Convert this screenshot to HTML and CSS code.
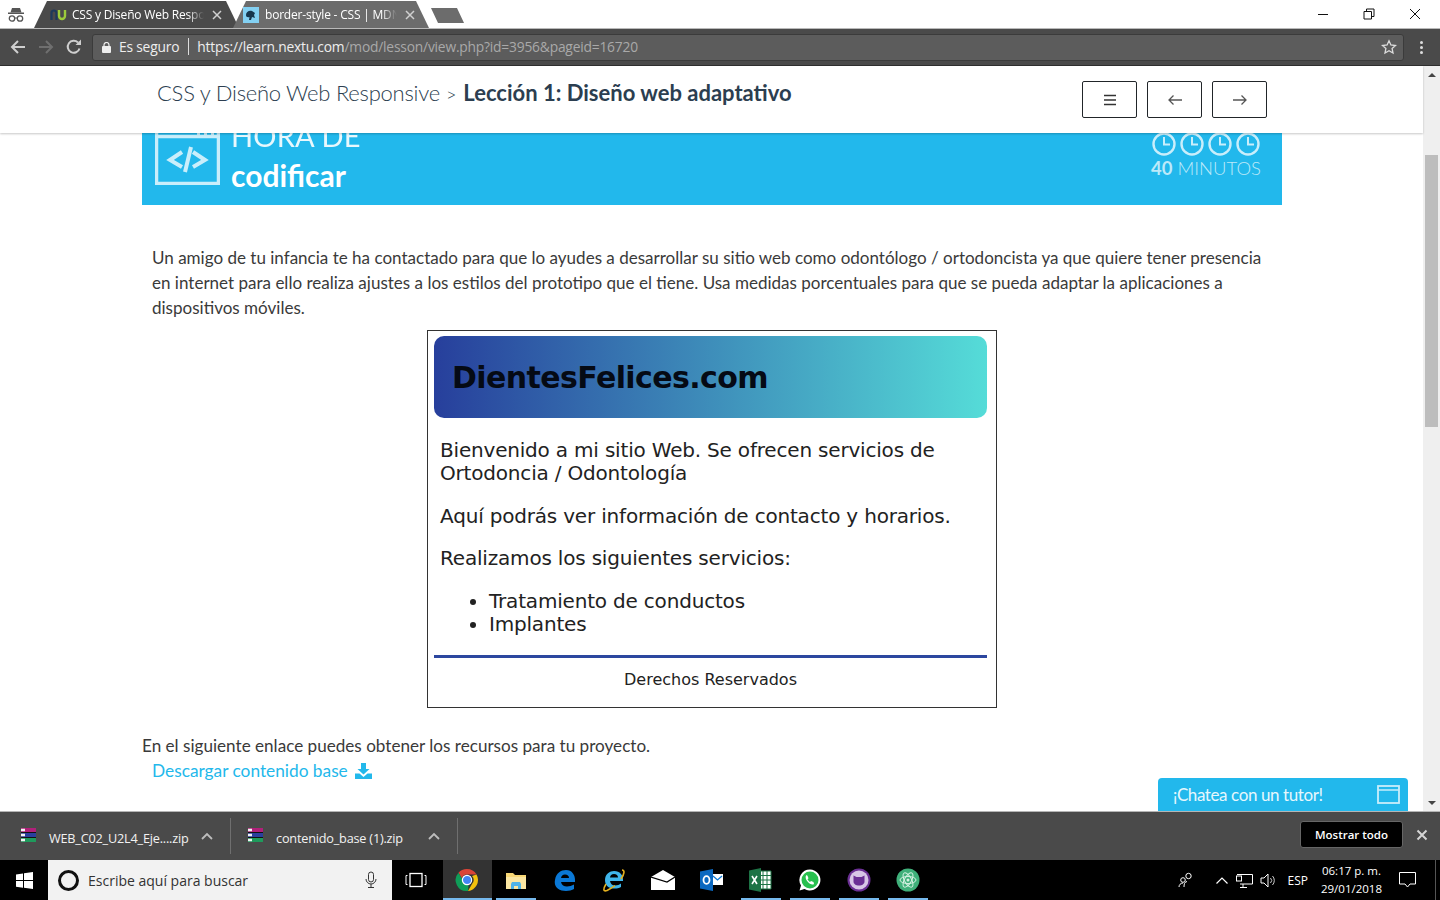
FILE: index.html
```html
<!DOCTYPE html>
<html lang="es">
<head>
    <meta charset="UTF-8">
    <title>CSS y Diseño Web Responsive</title>
    <link rel="stylesheet" href="styles.css">
</head>
<body>
<div class="screen">
    <div class="tabstrip">
        <svg class="incognito" width="18" height="18" viewBox="0 0 18 18"><path d="M5 2h8l1.500 4.500h-11z" fill="#555"/><rect x="1" y="6.500" width="16" height="1.500" fill="#555"/><circle cx="5" cy="12.500" r="2.700" fill="none" stroke="#555" stroke-width="1.300"/><circle cx="13" cy="12.500" r="2.700" fill="none" stroke="#555" stroke-width="1.300"/><path d="M7.500 12h3" stroke="#555"/></svg>
        <div class="tab tab-active">
            <svg width="17" height="14" viewBox="0 0 17 14"><path d="M1.500 12V5a2.500 2.500 0 0 1 5 0v7" fill="none" stroke="#1d3a5c" stroke-width="2.200"/><path d="M9 2v6a3 3 0 0 0 6 0V2" fill="none" stroke="#9ccb3b" stroke-width="2.400"/></svg>
            <span class="tab-title">CSS y Diseño Web Respo</span>
            <svg class="tab-x" width="10" height="10" viewBox="0 0 10 10"><path d="M1 1l8 8M9 1L1 9" stroke="#d0d0d0" stroke-width="1.500"/></svg>
        </div>
        <div class="tab tab-other">
            <svg width="16" height="16" viewBox="0 0 16 16"><rect width="16" height="16" fill="#83d0f2"/><path d="M3 8c0-3 3-5 6-4l3 2-1 2 1 3-3-1-1 3H6l.5-3C4.500 10.500 3 10 3 8z" fill="#16364d"/></svg>
            <span class="tab-title">border-style - CSS | MDN</span>
            <svg class="tab-x" width="10" height="10" viewBox="0 0 10 10"><path d="M1 1l8 8M9 1L1 9" stroke="#d0d0d0" stroke-width="1.500"/></svg>
        </div>
        <div class="tab-new"></div>
        <div class="win-controls">
            <svg width="12" height="12" viewBox="0 0 12 12"><path d="M1 6.500h10" stroke="#111"/></svg>
            <svg width="12" height="12" viewBox="0 0 12 12"><path d="M3.500 3V1h7.500v7.500H9M1 3.500h7.500V11H1z" fill="none" stroke="#111"/></svg>
            <svg width="12" height="12" viewBox="0 0 12 12"><path d="M1 1l10 10M11 1L1 11" stroke="#111"/></svg>
        </div>
    </div>

    <div class="toolbar">
        <svg class="nav-ic" width="16" height="16" viewBox="0 0 16 16"><path d="M15 8H2M8 2L2 8l6 6" fill="none" stroke="#cfcfcf" stroke-width="2"/></svg>
        <svg class="nav-ic" width="16" height="16" viewBox="0 0 16 16"><path d="M1 8h13M8 2l6 6-6 6" fill="none" stroke="#6f6f6f" stroke-width="2"/></svg>
        <svg class="nav-ic" width="16" height="16" viewBox="0 0 16 16"><path d="M13.500 9.500A6 6 0 1 1 12 3.500" fill="none" stroke="#cfcfcf" stroke-width="2"/><path d="M9.500 6H15V.5z" fill="#cfcfcf"/></svg>
        <div class="omnibox">
            <svg width="9" height="11" viewBox="0 0 9 11"><rect y="4" width="9" height="7" rx="1" fill="#eee"/><path d="M2 5V3a2.500 2.500 0 0 1 5 0v2" fill="none" stroke="#eee" stroke-width="1.200"/></svg>
            <span class="secure">Es seguro</span>
            <span class="url"><b>https://learn.nextu.com</b>/mod/lesson/view.php?id=3956&amp;pageid=16720</span>
            <svg class="star" width="16" height="16" viewBox="0 0 16 16"><path d="M8 1.800l1.900 4.200 4.600.5-3.400 3 .9 4.500L8 11.700 4 14l.9-4.500-3.400-3 4.600-.5z" fill="none" stroke="#dcdcdc" stroke-width="1.300"/></svg>
        </div>
        <div class="kebab"><i></i><i></i><i></i></div>
    </div>

    <div class="viewport">
        <div class="page-col">
            <header class="lesson-bar">
                <h1 class="crumbs"><span class="crumb-course">CSS y Diseño Web Responsive</span> <span class="crumb-sep">&gt;</span> <strong>Lección 1: Diseño web adaptativo</strong></h1>
                <div class="lesson-btns">
                    <button class="nav-btn"><svg width="14" height="12" viewBox="0 0 14 12"><path d="M1 1.500h12M1 6h12M1 10.500h12" stroke="#333" stroke-width="1.500"/></svg></button>
                    <button class="nav-btn"><svg width="16" height="12" viewBox="0 0 16 12"><path d="M15 6H2M6.500 1.500L2 6l4.500 4.500" fill="none" stroke="#555" stroke-width="1.300"/></svg></button>
                    <button class="nav-btn"><svg width="16" height="12" viewBox="0 0 16 12"><path d="M1 6h13M9.500 1.500L14 6l-4.500 4.500" fill="none" stroke="#555" stroke-width="1.300"/></svg></button>
                </div>
            </header>
            <main class="content">
                <section class="banner">
                    <svg class="code-ic" width="65" height="66" viewBox="0 0 65 66"><path d="M3 4h59a2 2 0 0 1 2 2v57a2 2 0 0 1-2 2H3a2 2 0 0 1-2-2V6a2 2 0 0 1 2-2z" fill="none" stroke="#c9eefb" stroke-width="4.500"/><path d="M2 17.500h61" stroke="#c9eefb" stroke-width="3.500"/><path d="M42 15h3M49 15h3M56 15h3" stroke="#c9eefb" stroke-width="4"/><path d="M27 33l-12 8 12 7M38 33l12 8-12 7M36 28l-6 25" fill="none" stroke="#c9eefb" stroke-width="4"/></svg>
                    <div class="banner-title"><span>HORA DE</span><b>codificar</b></div>
                    <div class="banner-time">
                        <div class="clocks">
                            <svg width="26" height="26" viewBox="0 0 26 26"><circle cx="13" cy="13" r="10.500" fill="none" stroke="#c9eefb" stroke-width="2.400"/><path d="M13 6v7.500h6" fill="none" stroke="#c9eefb" stroke-width="2"/></svg>
                            <svg width="26" height="26" viewBox="0 0 26 26"><circle cx="13" cy="13" r="10.500" fill="none" stroke="#c9eefb" stroke-width="2.400"/><path d="M13 6v7.500h6" fill="none" stroke="#c9eefb" stroke-width="2"/></svg>
                            <svg width="26" height="26" viewBox="0 0 26 26"><circle cx="13" cy="13" r="10.500" fill="none" stroke="#c9eefb" stroke-width="2.400"/><path d="M13 6v7.500h6" fill="none" stroke="#c9eefb" stroke-width="2"/></svg>
                            <svg width="26" height="26" viewBox="0 0 26 26"><circle cx="13" cy="13" r="10.500" fill="none" stroke="#c9eefb" stroke-width="2.400"/><path d="M13 6v7.500h6" fill="none" stroke="#c9eefb" stroke-width="2"/></svg>
                        </div>
                        <div class="minutes"><b>40</b> MINUTOS</div>
                    </div>
                </section>

                <p class="intro">Un amigo de tu infancia te ha contactado para que lo ayudes a desarrollar su sitio web como odontólogo / ortodoncista ya que quiere tener presencia en internet para ello realiza ajustes a los estilos del prototipo que el tiene. Usa medidas porcentuales para que se pueda adaptar la aplicaciones a dispositivos móviles.</p>

                <figure class="sample">
                    <div class="sample-head">DientesFelices.com</div>
                    <div class="sample-body">
                        <p>Bienvenido a mi sitio Web. Se ofrecen servicios de Ortodoncia / Odontología</p>
                        <p>Aquí podrás ver información de contacto y horarios.</p>
                        <p>Realizamos los siguientes servicios:</p>
                        <ul>
                            <li>Tratamiento de conductos</li>
                            <li>Implantes</li>
                        </ul>
                    </div>
                    <div class="sample-foot">Derechos Reservados</div>
                </figure>

                <p class="resources">En el siguiente enlace puedes obtener los recursos para tu proyecto.</p>
                <a class="download-link" href="#">Descargar contenido base
                    <svg width="17" height="16" viewBox="0 0 17 16"><path d="M6 0h5v6h3.500L8.500 11.500 2.500 6H6z" fill="#23b8eb"/><path d="M0 10.500h4.500l4 3.500 4-3.500H17V16H0z" fill="#23b8eb"/></svg>
                </a>
            </main>
        </div>
        <div class="scrollbar">
            <span class="arrow-up"></span>
            <div class="thumb"></div>
            <span class="arrow-down"></span>
        </div>
        <div class="chat-tab">
            <span>¡Chatea con un tutor!</span>
            <svg width="23" height="19" viewBox="0 0 23 19"><rect x="1" y="1" width="21" height="17" fill="none" stroke="#c9eefb" stroke-width="1.800"/><path d="M1 5h21" stroke="#c9eefb" stroke-width="1.500"/></svg>
        </div>
    </div>

    <div class="downloads">
        <div class="dl-item">
            <svg class="rar" width="17" height="16" viewBox="0 0 17 16"><rect x="1" y="1" width="15" height="4" fill="#b0207a"/><rect x="1" y="6" width="15" height="4" fill="#2a3f9d"/><rect x="1" y="11" width="15" height="4" fill="#1f9a5c"/><path d="M1 3h4M1 8h4M1 13h4" stroke="#f2f2f2" stroke-width="2.500"/><path d="M1 5.500h15M1 10.500h15" stroke="#111"/></svg>
            <span class="dl-name">WEB_C02_U2L4_Eje....zip</span>
            <svg width="12" height="8" viewBox="0 0 12 8"><path d="M1 7l5-5 5 5" fill="none" stroke="#bdbdbd" stroke-width="1.800"/></svg>
        </div>
        <div class="dl-item dl-second">
            <svg class="rar" width="17" height="16" viewBox="0 0 17 16"><rect x="1" y="1" width="15" height="4" fill="#b0207a"/><rect x="1" y="6" width="15" height="4" fill="#2a3f9d"/><rect x="1" y="11" width="15" height="4" fill="#1f9a5c"/><path d="M1 3h4M1 8h4M1 13h4" stroke="#f2f2f2" stroke-width="2.500"/><path d="M1 5.500h15M1 10.500h15" stroke="#111"/></svg>
            <span class="dl-name">contenido_base (1).zip</span>
            <svg width="12" height="8" viewBox="0 0 12 8"><path d="M1 7l5-5 5 5" fill="none" stroke="#bdbdbd" stroke-width="1.800"/></svg>
        </div>
        <button class="show-all">Mostrar todo</button>
        <svg class="dl-close" width="12" height="12" viewBox="0 0 12 12"><path d="M1.500 1.500l9 9M10.500 1.500l-9 9" stroke="#d5d5d5" stroke-width="2"/></svg>
    </div>

    <div class="taskbar">
        <svg class="start" width="17" height="17" viewBox="0 0 17 17"><path d="M0 2.400L7 1.400v6.700H0zM8 1.300L17 0v8.100H8zM0 9h7v6.700l-7-1zM8 9h9v8l-9-1.300z" fill="#fff"/></svg>
        <div class="search">
            <span class="cortana"></span>
            <span class="search-text">Escribe aquí para buscar</span>
            <svg width="12" height="18" viewBox="0 0 12 18"><rect x="3.500" y="1" width="5" height="10" rx="2.500" fill="none" stroke="#333"/><path d="M1 8a5 5 0 0 0 10 0M6 13v3M3 16.500h6" fill="none" stroke="#333"/></svg>
        </div>
        <svg class="taskview" width="22" height="16" viewBox="0 0 22 16"><rect x="5" y="1.500" width="12" height="13" fill="none" stroke="#fff" stroke-width="1.300"/><path d="M2.500 3.500H1v9h1.500M19.500 3.500H21v9h-1.500" fill="none" stroke="#fff"/></svg>
        <div class="apps">
            <div class="app app-active app-open">
                <svg width="24" height="24" viewBox="0 0 24 24"><path d="M12 1a11 11 0 0 1 9.500 5.500H12a5.500 5.500 0 0 0-5.200 3.800L3.500 4.700A11 11 0 0 1 12 1z" fill="#db4437"/><path d="M21.500 6.500A11 11 0 0 1 13 23l4-7a5.500 5.500 0 0 0 0-8z" fill="#f4c20d"/><path d="M13 23A11 11 0 0 1 3.500 4.700L8 12.500A5.500 5.500 0 0 0 13.500 17z" fill="#0f9d58"/><circle cx="12" cy="12" r="4.600" fill="#4285f4" stroke="#fff" stroke-width="1.200"/></svg>
            </div>
            <div class="app app-open">
                <svg width="22" height="20" viewBox="0 0 22 20"><path d="M1 3h7l2 2h11v14H1z" fill="#f8d775"/><path d="M1 7h20v12H1z" fill="#fbe6a2"/><path d="M6 19v-5l1-2h8l1 2v5h-3v-3H9v3z" fill="#4fb3e8"/></svg>
            </div>
            <div class="app">
                <svg width="22" height="22" viewBox="0 0 22 22"><path d="M1 11C2 4 7 1 12 1c6 0 9 5 9 10v2H7c.5 3 3 4.500 6 4.500 2.500 0 5-.8 7-2V20c-2 1.200-5 2-8 2C5 22-.5 18 1 11zm6-2h8c0-2-1.500-3.500-4-3.500S7.500 7 7 9z" fill="#0a78d6"/></svg>
            </div>
            <div class="app">
                <svg width="24" height="24" viewBox="0 0 24 24"><path d="M3 12c0-6 5-9 9-9 6 0 9 4 9 9v1H8c.5 3 2.500 4.500 5 4.500 2.500 0 4.500-.8 6-2v3.500c-2 1-4 1.500-6.500 1.500C7 20.500 3 18 3 12zm5-2.500h8C16 7.500 14.500 6 12 6S8.300 7.500 8 9.500z" fill="#3fb5ea"/><path d="M20 2c3 0 2.500 4-1 9M4 16c-3 5-3 8 1 6.500 2-1 5-2.500 8-5" fill="none" stroke="#e4b01e" stroke-width="1.600"/></svg>
            </div>
            <div class="app">
                <svg width="24" height="20" viewBox="0 0 24 20"><path d="M0 7l12-7 12 7v13H0z" fill="#fff"/><path d="M0 7l16 5 8-5" fill="none" stroke="#000" stroke-width="1.300"/></svg>
            </div>
            <div class="app">
                <svg width="23" height="22" viewBox="0 0 23 22"><path d="M12 5h11v11H12z" fill="#fff"/><path d="M13 7l4.500 4L22 7" fill="none" stroke="#0a78d6" stroke-width="1.300"/><path d="M0 2.500L13 0v22L0 19.500z" fill="#0a68c0"/><ellipse cx="6.500" cy="11" rx="3" ry="3.800" fill="none" stroke="#fff" stroke-width="1.800"/></svg>
            </div>
            <div class="app app-open">
                <svg width="23" height="24" viewBox="0 0 23 24"><path d="M11 3h11v18H11z" fill="#fff" stroke="#1d7345"/><path d="M14 3v18M18 3v18M11 7.500h11M11 12h11M11 16.500h11" stroke="#1d7345"/><path d="M0 2.500L12 0v24L0 21.500z" fill="#1d7345"/><path d="M3 8l5 8M8 8l-5 8" stroke="#fff" stroke-width="1.600"/></svg>
            </div>
            <div class="app app-open">
                <svg width="24" height="24" viewBox="0 0 24 24"><path d="M12 1.500a10.500 10.500 0 0 0-9 16L1.500 22.500l5-1.500A10.500 10.500 0 1 0 12 1.500z" fill="#fff"/><circle cx="12" cy="12" r="8.500" fill="#28c04e"/><path d="M8.500 7c-1.500 1.500-1 4 1 6.500s5 4 6.500 2.500l-.5-2-2.500-1-1 1c-1-.5-2-1.700-2.500-2.700l1-1-1-2.500z" fill="#fff"/></svg>
            </div>
            <div class="app app-open">
                <svg width="24" height="24" viewBox="0 0 24 24"><circle cx="12" cy="12" r="11.500" fill="#6b2f94"/><circle cx="12" cy="12" r="9.500" fill="#d8c6e6"/><path d="M6.500 7.500l3 1.500h5l3-1.500v6c0 2.500-2.500 4-5.500 4s-5.500-1.500-5.500-4z" fill="#6b2f94"/></svg>
            </div>
            <div class="app app-open">
                <svg width="24" height="24" viewBox="0 0 24 24"><circle cx="12" cy="12" r="11.500" fill="#3fb07a"/><g fill="none" stroke="#d6f2e3" stroke-width="1"><ellipse cx="12" cy="12" rx="8" ry="3.500"/><ellipse cx="12" cy="12" rx="8" ry="3.500" transform="rotate(60 12 12)"/><ellipse cx="12" cy="12" rx="8" ry="3.500" transform="rotate(120 12 12)"/></g><circle cx="12" cy="12" r="1.500" fill="#d6f2e3"/></svg>
            </div>
        </div>
        <div class="tray">
            <svg class="tray-person" width="16" height="16" viewBox="0 0 16 16"><circle cx="10.500" cy="4" r="2.700" fill="none" stroke="#fff"/><path d="M6 15c0-3 .5-5 3-5.500" fill="none" stroke="#fff"/><circle cx="5" cy="8" r="2.300" fill="none" stroke="#fff"/><path d="M1 15c0-2 1.500-4 4-4" fill="none" stroke="#fff"/></svg>
            <svg class="tray-caret" width="12" height="7" viewBox="0 0 12 7"><path d="M.5 6.500L6 1l5.500 5.500" fill="none" stroke="#fff" stroke-width="1.200"/></svg>
            <svg class="tray-net" width="17" height="15" viewBox="0 0 17 15"><path d="M1 1.500h15.500v9.500H4M7 11v3M4 14.500h7" fill="none" stroke="#fff"/><rect x=".5" y="3" width="5" height="5" fill="#000" stroke="#fff"/></svg>
            <svg class="tray-vol" width="17" height="15" viewBox="0 0 17 15"><path d="M1 5h3l4-4v13l-4-4H1z" fill="none" stroke="#fff"/><path d="M10.500 5a3.500 3.500 0 0 1 0 5M12.500 3a6.500 6.500 0 0 1 0 9" fill="none" stroke="#ccc"/></svg>
            <span class="tray-lang">ESP</span>
            <div class="tray-clock"><span>06:17 p. m.</span><span>29/01/2018</span></div>
            <svg class="tray-note" width="17" height="16" viewBox="0 0 17 16"><path d="M.5.500h16v11.500H11l-2.500 3-2.500-3H.5z" fill="none" stroke="#fff"/></svg>
            <span class="tray-desk"></span>
        </div>
    </div>
</div>
</body>
</html>
```

FILE: styles.css
```css
*{
    margin: 0;
    padding: 0;
    box-sizing: border-box;
}
html, body{
    height: 100%;
    overflow: hidden;
}
body{
    font-family: "Open Sans", "Noto Sans", sans-serif;
    background: #fff;
}
.screen{
    width: 1440px;
    height: 900px;
    display: flex;
    flex-direction: column;
}

/* tab strip */
.tabstrip{
    height: 29px;
    flex-shrink: 0;
    display: flex;
    align-items: flex-end;
    background: #fff;
    border-bottom: 1px solid #b9b9b9;
    padding-left: 7px;
}
.incognito{
    margin-bottom: 4px;
    margin-right: 9px;
}
.tab{
    height: 27px;
    display: flex;
    align-items: center;
    gap: 5px;
    font-size: 12px;
    letter-spacing: -0.2px;
    color: #fff;
    clip-path: polygon(0 100%, 13px 0, calc(100% - 13px) 0, 100% 100%);
    padding-left: 16px;
}
.tab-active{
    width: 205px;
    background: #4a4a4a;
}
.tab-other{
    width: 196px;
    margin-left: -6px;
    background: #6c6c6c;
    padding-left: 10px;
    gap: 6px;
}
.tab-title{
    width: 132px;
    overflow: hidden;
    white-space: nowrap;
    mask-image: linear-gradient(90deg, #000 88%, transparent);
}
.tab-other .tab-title{
    width: 132px;
}
.tab-x{
    margin-left: 3px;
    flex-shrink: 0;
}
.tab-other .tab-x{
    margin-left: 2px;
}
.tab-new{
    width: 33px;
    height: 15px;
    margin-left: 2px;
    margin-bottom: 5px;
    background: #6c6c6c;
    clip-path: polygon(0 0, 26px 0, 100% 100%, 7px 100%);
}
.win-controls{
    margin-left: auto;
    display: flex;
    align-items: center;
    gap: 34px;
    height: 28px;
    padding-right: 19px;
}

/* toolbar */
.toolbar{
    height: 37px;
    flex-shrink: 0;
    display: flex;
    align-items: center;
    background: #4a4a4a;
    border-bottom: 1px solid #2e2e2e;
    padding-left: 10px;
}
.nav-ic{
    margin-right: 12px;
}
.omnibox{
    width: 1312px;
    height: 27px;
    margin-left: -2px;
    display: flex;
    align-items: center;
    background: #5c5c5c;
    border: 1px solid #3b3b3b;
    border-radius: 3px;
    padding-left: 9px;
    font-size: 13.800px;
    letter-spacing: -0.2px;
}
.secure{
    color: #eee;
    margin-left: 8px;
    margin-bottom: 2px;
    padding-right: 9px;
    border-right: 1px solid #ddd;
    line-height: 17px;
}
.url{
    margin-left: 8px;
    margin-bottom: 2px;
    color: #a9a9a9;
    white-space: nowrap;
}
.url b{
    font-weight: 400;
    color: #eee;
}
.star{
    margin-left: auto;
    margin-right: 6px;
}
.kebab{
    margin-left: 16px;
    display: flex;
    flex-direction: column;
    gap: 2px;
}
.kebab i{
    width: 3px;
    height: 3px;
    background: #ddd;
    border-radius: 50%;
}

/* page */
.viewport{
    flex: 1;
    min-height: 0;
    display: flex;
    position: relative;
    overflow: hidden;
}
.page-col{
    flex: 1;
    min-width: 0;
    display: flex;
    flex-direction: column;
}
.lesson-bar{
    height: 67px;
    flex-shrink: 0;
    display: flex;
    align-items: flex-start;
    justify-content: space-between;
    padding: 15px 156px 0 157px;
    background: #fff;
    position: relative;
    z-index: 2;
    box-shadow: 0 1px 2px rgba(0,0,0,.22);
}
.crumbs{
    font-family: Lato, sans-serif;
    font-size: 22px;
    font-weight: 300;
    line-height: 24px;
    color: #2c3e50;
    white-space: nowrap;
}
.crumb-course{
    letter-spacing: -0.25px;
}
.crumbs strong{
    font-weight: 700;
    margin-left: 1px;
}
.crumb-sep{
    font-size: 18px;
    margin-left: 0;
}
.lesson-btns{
    display: flex;
    gap: 10px;
}
.nav-btn{
    width: 55px;
    height: 37px;
    background: #fff;
    border: 1px solid #212529;
    border-radius: 2px;
    display: flex;
    align-items: center;
    justify-content: center;
}
.content{
    flex: 1;
    min-height: 0;
    overflow: hidden;
    font-family: Lato, sans-serif;
    color: #3a3a3a;
    padding: 0 141px 0 142px;
}
.banner{
    height: 107px;
    margin-top: -35px;
    background: #22b8ec;
    display: flex;
    color: #fff;
    padding: 10px 21px 0 13px;
}
.code-ic{
    margin-top: 11px;
}
.banner-title{
    margin-left: 11px;
    font-size: 30px;
    line-height: 36px;
    display: flex;
    flex-direction: column;
    padding-top: 10px;
}
.banner-title b{
    margin-top: 3px;
}
.banner-title span{
    font-size: 29px;
    letter-spacing: .2px;
    opacity: .9;
}
.banner-time{
    margin-left: auto;
    padding-top: 23px;
    display: flex;
    flex-direction: column;
    align-items: center;
    color: #bce9f9;
}
.clocks{
    display: flex;
    gap: 2px;
}
.minutes{
    font-size: 18.500px;
    font-weight: 300;
    line-height: 24px;
    margin-top: -1px;
}
.minutes b{
    font-weight: 700;
}
.intro{
    margin: 40px 10px 0 10px;
    font-size: 17.050px;
    line-height: 25px;
}
.sample{
    width: 570px;
    height: 378px;
    margin: 10px 0 0 285px;
    border: 1px solid #333;
    padding: 5px 9px 0 6px;
    font-family: "DejaVu Sans", Verdana, sans-serif;
    color: #222;
}
.sample-head{
    height: 82px;
    display: flex;
    align-items: center;
    padding-left: 18px;
    border-radius: 10px;
    background: linear-gradient(90deg, #273f9c, #55dcd8);
    font-size: 30px;
    font-weight: 700;
    letter-spacing: -0.6px;
    color: #050a14;
}
.sample-body{
    padding: 21px 0 0 6px;
    font-size: 20px;
    letter-spacing: -0.19px;
    line-height: 23px;
    height: 240px;
    border-bottom: 3px solid #2c479f;
}
.sample-body p{
    margin-bottom: 19.700px;
}
.sample-body ul{
    padding-left: 49px;
}
.sample-foot{
    text-align: center;
    font-size: 16px;
    padding-top: 12px;
}
.resources{
    margin-top: 25px;
    font-size: 17.120px;
    line-height: 25px;
}
.download-link{
    display: flex;
    align-items: center;
    gap: 7px;
    margin-left: 10px;
    font-size: 17.300px;
    line-height: 25px;
    color: #23b8eb;
    text-decoration: none;
}
.scrollbar{
    width: 17px;
    flex-shrink: 0;
    background: #efefef;
    display: flex;
    flex-direction: column;
    align-items: center;
    padding: 7px 0 6px;
}
.arrow-up, .arrow-down{
    width: 0;
    height: 0;
    border-left: 4px solid transparent;
    border-right: 4px solid transparent;
}
.arrow-up{
    border-bottom: 4px solid #444;
}
.arrow-down{
    border-top: 4px solid #444;
    margin-top: auto;
}
.thumb{
    width: 13px;
    height: 272px;
    margin-top: 78px;
    background: #bdbdbd;
}
.chat-tab{
    position: absolute;
    right: 32px;
    bottom: 0;
    width: 250px;
    height: 33px;
    display: flex;
    align-items: center;
    justify-content: space-between;
    padding: 0 8px 0 15px;
    background: #22b8ec;
    border-radius: 4px 4px 0 0;
    color: #e6f7fd;
    font-family: Lato, sans-serif;
    font-size: 17px;
    letter-spacing: -0.4px;
}

/* downloads */
.downloads{
    height: 49px;
    flex-shrink: 0;
    display: flex;
    align-items: center;
    background: #4a4a4a;
    border-top: 1px solid #b5b5b5;
    color: #f2f2f2;
    font-size: 12.700px;
    letter-spacing: -0.2px;
}
.dl-item{
    width: 231px;
    height: 36px;
    display: flex;
    align-items: center;
    border-right: 1px solid #6f6f6f;
    padding-left: 20px;
}
.dl-second{
    width: 227px;
    padding-left: 16px;
}
.rar{
    margin-bottom: 2px;
}
.dl-name{
    margin-left: 12px;
    width: 152px;
    padding-top: 3px;
    white-space: nowrap;
}
.dl-second .dl-name{
    margin-left: 12px;
    width: 152px;
}
.show-all{
    margin-left: auto;
    margin-bottom: 3px;
    width: 103px;
    height: 27px;
    background: #000;
    border: 1px solid #666;
    border-radius: 3px;
    color: #fff;
    font-family: inherit;
    font-size: 11.500px;
    font-weight: 600;
}
.dl-close{
    margin: 0 12px 3px 13px;
}

/* taskbar */
.taskbar{
    height: 40px;
    flex-shrink: 0;
    display: flex;
    align-items: center;
    background: #000;
    color: #fff;
}
.start{
    margin-left: 16px;
}
.search{
    width: 344px;
    height: 40px;
    margin-left: 15px;
    display: flex;
    align-items: center;
    background: #f2f2f2;
    padding: 0 15px 0 10px;
    color: #333;
    font-size: 14px;
}
.cortana{
    width: 21px;
    height: 21px;
    border: 3px solid #111;
    border-radius: 50%;
}
.search-text{
    margin-left: 9px;
    flex: 1;
}
.taskview{
    margin-left: 13px;
}
.apps{
    margin-left: 16px;
    display: flex;
    height: 40px;
}
.app{
    width: 49px;
    height: 40px;
    display: flex;
    align-items: center;
    justify-content: center;
    padding-right: 2px;
    position: relative;
}
.app-active{
    background: #333;
}
.app-open::after{
    content: "";
    position: absolute;
    left: 4px;
    right: 5px;
    bottom: 0;
    height: 2px;
    background: #76b9ed;
}
.app-active::after{
    left: 0;
    right: 0;
}
.tray{
    margin-left: auto;
    height: 40px;
    display: flex;
    align-items: center;
    font-size: 12px;
}
.tray-caret{
    margin-left: 22px;
}
.tray-net{
    margin-left: 8px;
}
.tray-vol{
    margin-left: 7px;
}
.tray-lang{
    margin-left: 10px;
}
.tray-clock{
    margin-left: 13px;
    font-size: 11.500px;
    display: flex;
    flex-direction: column;
    align-items: center;
    line-height: 18px;
}
.tray-note{
    margin-left: 17px;
}
.tray-desk{
    width: 1px;
    height: 40px;
    background: #555;
    margin-left: 19px;
    margin-right: 4px;
}
```
